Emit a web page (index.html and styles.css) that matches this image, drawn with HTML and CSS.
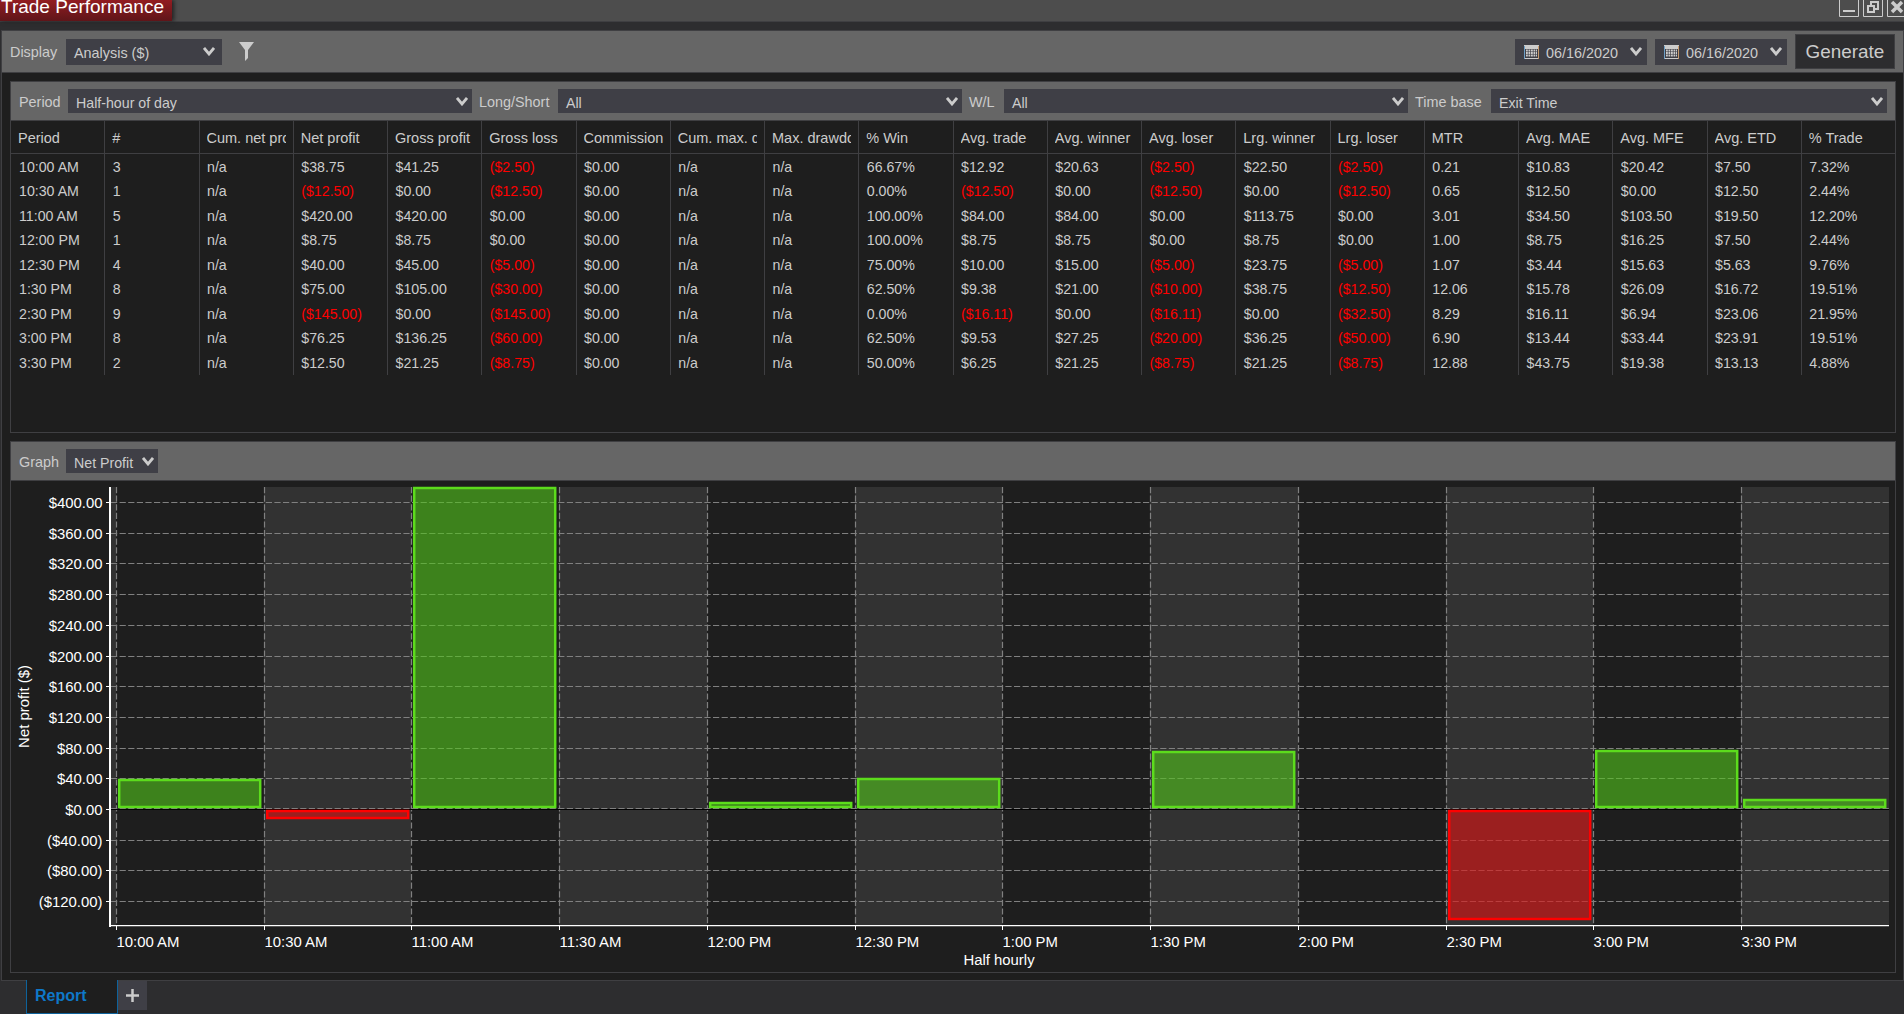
FILE: index.html
```html
<!DOCTYPE html>
<html lang="en">
<head>
    <meta charset="UTF-8">
    <meta name="viewport" content="width=device-width, initial-scale=1.0">
    <title>Trade Performance</title>
    <link rel="stylesheet" href="styles.css">
</head>
<body>
    <div class="title-bar">
        <div class="title">Trade Performance</div>
        <div class="window-buttons">
            <svg width="20" height="17" viewBox="0 0 20 17"><path class="frame" d="M.5 0V16.5H19.5V0"/><path class="glyph" d="M4 11H16"/></svg>
            <svg width="20" height="17" viewBox="0 0 20 17"><path class="frame" d="M.5 0V16.5H19.5V0"/><path class="glyph" d="M8 5V2H15V9H12M5 6H11V12H5Z"/></svg>
            <svg width="20" height="17" viewBox="0 0 20 17"><path class="frame" d="M.5 0V16.5H19.5V0"/><path class="glyph cross" d="M5 2L15 12M15 2L5 12"/></svg>
        </div>
    </div>

    <div class="window">
        <div class="toolbar">
            <span class="label">Display</span>
            <div class="select display-select"><span>Analysis ($)</span><svg class="arrow" width="12" height="9" viewBox="0 0 12 9"><path d="M1 1L6 7L11 1"/></svg></div>
            <svg class="filter" width="15" height="19" viewBox="0 0 15 19"><path d="M0 0H15L9 8V16L6 19V8Z"/></svg>
            <div class="select date"><svg class="calendar" width="15" height="15" viewBox="0 0 15 15"><path class="page" d="M0 0H15V14H0Z"/><path class="cells" d="M1 4H14V13H1Z"/><path class="days" d="M2 5.5H13M2 8H13M2 10.5H13"/><path class="edge-left" d="M.5 1V14"/><path class="edge-right" d="M14.5 1V14"/></svg><span>06/16/2020</span><svg class="arrow" width="12" height="9" viewBox="0 0 12 9"><path d="M1 1L6 7L11 1"/></svg></div>
            <div class="select date"><svg class="calendar" width="15" height="15" viewBox="0 0 15 15"><path class="page" d="M0 0H15V14H0Z"/><path class="cells" d="M1 4H14V13H1Z"/><path class="days" d="M2 5.5H13M2 8H13M2 10.5H13"/><path class="edge-left" d="M.5 1V14"/><path class="edge-right" d="M14.5 1V14"/></svg><span>06/16/2020</span><svg class="arrow" width="12" height="9" viewBox="0 0 12 9"><path d="M1 1L6 7L11 1"/></svg></div>
            <button class="generate">Generate</button>
        </div>

        <div class="panel analysis">
            <div class="panel-bar filters">
                <span class="label">Period</span>
                <div class="select"><span>Half-hour of day</span><svg class="arrow" width="12" height="9" viewBox="0 0 12 9"><path d="M1 1L6 7L11 1"/></svg></div>
                <span class="label">Long/Short</span>
                <div class="select"><span>All</span><svg class="arrow" width="12" height="9" viewBox="0 0 12 9"><path d="M1 1L6 7L11 1"/></svg></div>
                <span class="label">W/L</span>
                <div class="select"><span>All</span><svg class="arrow" width="12" height="9" viewBox="0 0 12 9"><path d="M1 1L6 7L11 1"/></svg></div>
                <span class="label">Time base</span>
                <div class="select"><span>Exit Time</span><svg class="arrow" width="12" height="9" viewBox="0 0 12 9"><path d="M1 1L6 7L11 1"/></svg></div>
            </div>
            <table class="report">
                <thead>
                    <tr id="report-head"></tr>
                </thead>
                <tbody id="report-rows"></tbody>
            </table>
        </div>

        <div class="panel graph">
            <div class="panel-bar">
                <span class="label">Graph</span>
                <div class="select graph-select"><span>Net Profit</span><svg class="arrow" width="12" height="9" viewBox="0 0 12 9"><path d="M1 1L6 7L11 1"/></svg></div>
            </div>
            <svg class="chart" id="chart" width="1884" height="491" viewBox="11 481 1884 491"></svg>
        </div>
    </div>

    <div class="tabs">
        <div class="tab">Report</div>
        <div class="add-tab"><svg width="13" height="13" viewBox="0 0 13 13"><path d="M6.5 0V13M0 6.5H13"/></svg></div>
    </div>

    <script>
        const columns = ['Period', '#', 'Cum. net profit', 'Net profit', 'Gross profit', 'Gross loss', 'Commission', 'Cum. max. drawdown', 'Max. drawdown', '% Win', 'Avg. trade', 'Avg. winner', 'Avg. loser', 'Lrg. winner', 'Lrg. loser', 'MTR', 'Avg. MAE', 'Avg. MFE', 'Avg. ETD', '% Trade'];
        const rows = [
            '10:00 AM|3|n/a|$38.75|$41.25|($2.50)|$0.00|n/a|n/a|66.67%|$12.92|$20.63|($2.50)|$22.50|($2.50)|0.21|$10.83|$20.42|$7.50|7.32%',
            '10:30 AM|1|n/a|($12.50)|$0.00|($12.50)|$0.00|n/a|n/a|0.00%|($12.50)|$0.00|($12.50)|$0.00|($12.50)|0.65|$12.50|$0.00|$12.50|2.44%',
            '11:00 AM|5|n/a|$420.00|$420.00|$0.00|$0.00|n/a|n/a|100.00%|$84.00|$84.00|$0.00|$113.75|$0.00|3.01|$34.50|$103.50|$19.50|12.20%',
            '12:00 PM|1|n/a|$8.75|$8.75|$0.00|$0.00|n/a|n/a|100.00%|$8.75|$8.75|$0.00|$8.75|$0.00|1.00|$8.75|$16.25|$7.50|2.44%',
            '12:30 PM|4|n/a|$40.00|$45.00|($5.00)|$0.00|n/a|n/a|75.00%|$10.00|$15.00|($5.00)|$23.75|($5.00)|1.07|$3.44|$15.63|$5.63|9.76%',
            '1:30 PM|8|n/a|$75.00|$105.00|($30.00)|$0.00|n/a|n/a|62.50%|$9.38|$21.00|($10.00)|$38.75|($12.50)|12.06|$15.78|$26.09|$16.72|19.51%',
            '2:30 PM|9|n/a|($145.00)|$0.00|($145.00)|$0.00|n/a|n/a|0.00%|($16.11)|$0.00|($16.11)|$0.00|($32.50)|8.29|$16.11|$6.94|$23.06|21.95%',
            '3:00 PM|8|n/a|$76.25|$136.25|($60.00)|$0.00|n/a|n/a|62.50%|$9.53|$27.25|($20.00)|$36.25|($50.00)|6.90|$13.44|$33.44|$23.91|19.51%',
            '3:30 PM|2|n/a|$12.50|$21.25|($8.75)|$0.00|n/a|n/a|50.00%|$6.25|$21.25|($8.75)|$21.25|($8.75)|12.88|$43.75|$19.38|$13.13|4.88%'
        ];

        document.getElementById('report-head').innerHTML = columns.map(name => `<th><div>${name}</div></th>`).join('');
        document.getElementById('report-rows').innerHTML = rows.map(row =>
            '<tr>' + row.split('|').map(cell => `<td${cell[0] === '(' ? ' class="loss"' : ''}>${cell}</td>`).join('') + '</tr>'
        ).join('');

        // chart
        const periods = ['10:00 AM', '10:30 AM', '11:00 AM', '11:30 AM', '12:00 PM', '12:30 PM', '1:00 PM', '1:30 PM', '2:00 PM', '2:30 PM', '3:00 PM', '3:30 PM'];
        const profits = [38.75, -12.5, 420, 0, 8.75, 40, 0, 75, 0, -145, 76.25, 12.5];
        const plotLeft = 111, plotRight = 1889, plotTop = 487, plotBottom = 925, zero = 809;
        const xAt = i => Math.round(116 + i * 147.73);
        const yAt = value => Math.round(zero - value * 0.7673);
        let svg = `<rect class="band" x="${plotLeft}" y="${plotTop}" width="5" height="${plotBottom - plotTop}"/>`;

        for (let i = 1; i < periods.length; i += 2) {
            const end = i === 11 ? plotRight : xAt(i + 1);
            svg += `<rect class="band" x="${xAt(i)}" y="${plotTop}" width="${end - xAt(i)}" height="${plotBottom - plotTop}"/>`;
        }
        for (let value = 400; value >= -120; value -= 40) {
            const y = yAt(value) + (value === 0 ? -0.5 : 0.5);
            const label = value < 0 ? `($${-value}.00)` : `$${value}.00`;
            svg += `<path class="grid" d="M${plotLeft} ${y}H${plotRight}"/>`;
            svg += `<path class="tick" d="M106 ${yAt(value) + 0.5}H109"/>`;
            svg += `<text class="axis-label" x="102.5" y="${yAt(value) + 5.5}" text-anchor="end">${label}</text>`;
        }
        periods.forEach((name, i) => {
            svg += `<path class="grid" d="M${xAt(i) + 0.5} ${plotTop}V${plotBottom}"/>`;
        });
        svg += `<path class="zero" d="M${plotLeft} ${zero + 0.5}H${plotRight}"/>`;
        profits.forEach((value, i) => {
            if (value === 0) return;
            const y = value > 0 ? yAt(value) + 1 : zero + 2;
            const end = value > 0 ? zero - 2 : yAt(value) - 1;
            svg += `<rect class="${value > 0 ? 'gain-bar' : 'loss-bar'}" x="${xAt(i) + 3.2}" y="${y}" width="141" height="${end - y}"/>`;
        });
        svg += `<path class="axis-shade" d="M${plotLeft} 926.5H${plotRight}"/>`;
        svg += `<path class="tick" d="M109 925.5H${plotRight}"/>`;
        svg += `<path class="axis" d="M110 ${plotTop}V927"/>`;
        periods.forEach((name, i) => {
            svg += `<path class="tick" d="M${xAt(i) + 0.5} 926V930"/>`;
            svg += `<text class="axis-label" x="${xAt(i) + 0.5}" y="947">${name}</text>`;
        });
        svg += '<text class="axis-label" x="999" y="965" text-anchor="middle">Half hourly</text>';
        svg += '<text class="axis-label" transform="translate(28.5 706.5) rotate(-90)" text-anchor="middle">Net profit ($)</text>';
        document.getElementById('chart').innerHTML = svg;
    </script>
</body>
</html>
```
FILE: styles.css
```css
* {
    box-sizing: border-box;
}
body {
    font-family: "Liberation Sans", Arial, sans-serif;
    font-size: 14.2px;
    margin: 0;
    height: 1014px;
    overflow: hidden;
    display: flex;
    flex-direction: column;
    background-color: #2d2d2f;
    color: #ccc;
}
svg {
    display: block;
    flex-shrink: 0;
}
.title-bar {
    display: flex;
    justify-content: space-between;
    height: 22px;
    flex-shrink: 0;
    background: #4d4d4d;
    border-bottom: 1px solid #3f3f42;
}
.title {
    width: 172px;
    height: 21px;
    padding-left: 1px;
    background: linear-gradient(#921c21, #5f1519);
    box-shadow: 2px 0 4px #222;
    color: #fff;
    font-size: 19px;
    line-height: 14px;
    white-space: nowrap;
}
.window-buttons {
    display: flex;
    gap: 4px;
    margin-right: -3px;
}
.window-buttons path {
    fill: none;
    stroke: #ccc;
}
.window-buttons .glyph {
    stroke-width: 2;
}
.window-buttons .cross {
    stroke-width: 3.5;
}
.window {
    height: 951px;
    flex-shrink: 0;
    margin: 8px 0 0 1px;
    border: 1px solid #3f3f42;
    background: #1e1e1e;
}
.toolbar {
    display: flex;
    align-items: center;
    height: 42px;
    padding: 0 8px;
    background: #666;
    border-bottom: 1px solid #3f3f42;
}
.toolbar .label {
    width: 48px;
    font-size: 14.4px;
}
.select {
    display: flex;
    align-items: center;
    justify-content: space-between;
    height: 24px;
    padding: 3px 4px 0 8px;
    background: #3f3f46;
    white-space: nowrap;
}
.arrow {
    margin-top: -3px;
}
.arrow path {
    fill: none;
    stroke: #ccc;
    stroke-width: 2.8;
}
.toolbar .select {
    height: 26px;
    padding-top: 2px;
}
.display-select {
    width: 156px;
    margin-left: 8px;
    font-size: 14.4px;
}
.toolbar .display-select {
    padding-right: 7px;
}
.filter {
    margin: 0 auto 0 17px;
    fill: #ccc;
}
.date {
    width: 132px;
    margin-right: 8px;
    font-size: 14.4px;
}
.toolbar .date {
    padding: 2px 5px 0 9px;
}
.date span {
    margin: 0 auto 0 7px;
}
.calendar {
    margin-top: -1px;
}
.calendar .page {
    fill: #ccc;
}
.calendar .cells {
    fill: #3f3f46;
}
.calendar .days {
    stroke: #ccc;
    stroke-width: 1.8;
    stroke-dasharray: 1.8 0.7;
}
.calendar .edge-left {
    stroke: #6d9fc6;
}
.calendar .edge-right {
    stroke: #c69a6d;
}
.generate {
    width: 100px;
    height: 35px;
    padding: 0;
    background: #2d2d2f;
    border: 1px solid #3f3f42;
    color: #ccc;
    font-family: inherit;
    font-size: 18.9px;
}
.panel {
    margin: 8px 7px 0 8px;
    border: 1px solid #3f3f42;
}
.analysis {
    height: 352px;
}
.graph {
    height: 532px;
}
.panel-bar {
    display: flex;
    align-items: center;
    height: 39px;
    padding: 0 8px;
    background: #666;
    border-bottom: 1px solid #3f3f42;
}
.panel-bar .label {
    padding-top: 1px;
    font-size: 14.4px;
}
.filters {
    display: grid;
    grid-template-columns: 49px 404px 86px 404px 42px 404px 83px 396px;
}
.filters .label {
    padding-left: 7px;
}
.filters .label:first-child {
    padding-left: 0;
}
.graph-select {
    width: 92px;
    margin-left: 7px;
}
.report {
    width: 1885px;
    table-layout: fixed;
    border-collapse: separate;
    border-spacing: 0;
}
.report th, .report td {
    padding: 0 0 0 7.5px;
    text-align: left;
    font-weight: normal;
    border-right: 1px solid #3f3f42;
}
.report th {
    height: 33px;
    padding: 1px 7px 0 7px;
    border-bottom: 1px solid #3f3f42;
    font-size: 14.5px;
}
.report th div {
    overflow: hidden;
    white-space: nowrap;
}
.report td {
    height: 24.5px;
    padding-top: 1px;
    line-height: 16px;
}
.report td:first-child {
    padding-left: 8px;
}
.report th:last-child, .report td:last-child {
    border-right: none;
}
.report .loss {
    color: #f00;
}
.chart .band {
    fill: #323232;
}
.chart .grid {
    fill: none;
    stroke: #808080;
    stroke-width: 1.2;
    stroke-dasharray: 6.2 2.4;
}
.chart .tick {
    stroke: #fff;
}
.chart .axis {
    stroke: #fff;
    stroke-width: 2;
}
.chart .axis-shade {
    stroke: #555;
}
.chart .zero {
    stroke: #000;
}
.chart .gain-bar {
    fill: rgba(82, 196, 26, 0.6);
    stroke: #5cdc1c;
    stroke-width: 2.5;
}
.chart .loss-bar {
    fill: rgba(225, 18, 18, 0.6);
    stroke: #f00;
    stroke-width: 2.5;
}
.chart .axis-label {
    fill: #fff;
    font-size: 14.9px;
}
.tabs {
    display: flex;
    height: 33px;
    padding-left: 26px;
    flex-shrink: 0;
}
.tab {
    width: 92px;
    margin-top: -1px;
    padding: 7px 0 0 8px;
    background: #1e1e1e;
    border: 1px solid #0e639c;
    border-top: none;
    color: #0e78c8;
    font-size: 16px;
    font-weight: bold;
}
.add-tab {
    display: flex;
    align-items: center;
    justify-content: center;
    width: 29px;
    height: 29px;
    background: #3f3f46;
}
.add-tab path {
    stroke: #ccc;
    stroke-width: 2.5;
}
```
